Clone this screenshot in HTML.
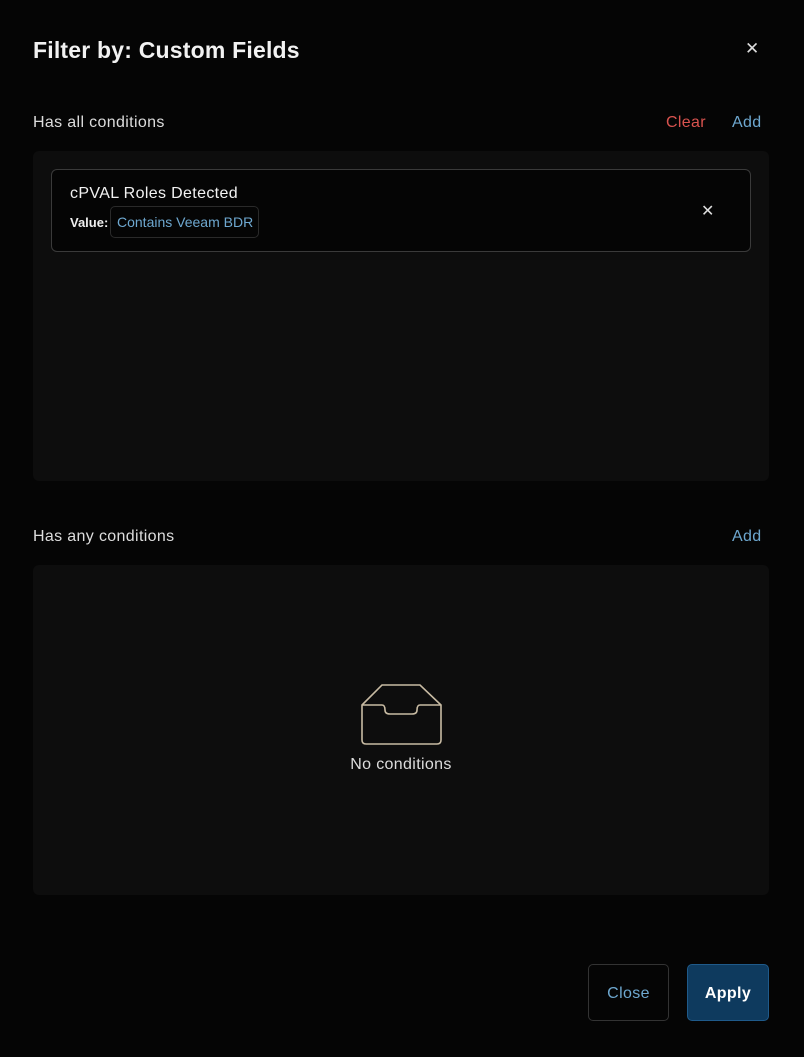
<!DOCTYPE html>
<html><head><style>
body{margin:0;width:804px;height:1057px;background:#050505;font-family:"Liberation Sans",sans-serif;color:#eee;position:relative;overflow:hidden;letter-spacing:0.35px}
.a{position:absolute}
.panel{position:absolute;left:33px;width:736px;background:#0d0d0d;border-radius:6px}
</style></head><body>
<div class="a" style="left:33px;top:37px;font-size:23px;font-weight:bold;color:#f2f2f2;letter-spacing:0.2px">Filter by: Custom Fields</div>
<div class="a" style="left:745px;top:39px;font-size:17px;color:#ddd">✕</div>
<div class="a" style="left:33px;top:114px;font-size:16px;color:#ddd">Has all conditions</div>
<div class="a" style="left:666px;top:114px;font-size:16px;color:#d9534f">Clear</div>
<div class="a" style="left:732px;top:114px;font-size:16px;color:#6ea8d0">Add</div>
<div class="panel" style="top:151px;height:330px"></div>
<div class="a" style="left:51px;top:169px;width:698px;height:81px;border:1px solid #3a3a3a;border-radius:6px;background:#050505"></div>
<div class="a" style="left:70px;top:185px;font-size:16px;color:#f2f2f2">cPVAL Roles Detected</div>
<div class="a" style="left:70px;top:215px;font-size:13px;font-weight:bold;color:#eee;letter-spacing:0">Value:</div>
<div class="a" style="left:110px;top:206px;height:30px;width:147px;border:1px solid #2a2a2a;border-radius:5px"></div>
<div class="a" style="left:117px;top:214px;font-size:14px;color:#6ea8d0;letter-spacing:0">Contains Veeam BDR</div>
<div class="a" style="left:701px;top:201px;font-size:16px;color:#ddd">✕</div>
<div class="a" style="left:33px;top:528px;font-size:16px;color:#ddd">Has any conditions</div>
<div class="a" style="left:732px;top:528px;font-size:16px;color:#6ea8d0">Add</div>
<div class="panel" style="top:565px;height:330px"></div>
<svg class="a" style="left:355px;top:680px" width="92" height="70" viewBox="355 680 92 70" fill="none" stroke="#c8bba3" stroke-width="1.6">
<path d="M382 685H420L441 705V740Q441 744 437 744H366Q362 744 362 740V705Z"/>
<path d="M362 705H382Q385 705 385 710Q385 714 390 714H412Q417 714 417 710Q417 705 420 705H441"/>
</svg>
<div class="a" style="left:0;width:802px;text-align:center;top:756px;font-size:16px;color:#ddd">No conditions</div>
<div class="a" style="left:588px;top:964px;width:79px;height:55px;border:1px solid #333;border-radius:5px;text-align:center;line-height:57px;font-size:16px;color:#6ea8d0">Close</div>
<div class="a" style="left:687px;top:964px;width:80px;height:55px;border:1px solid #1f5a8a;border-radius:5px;background:#0e3a5e;text-align:center;line-height:57px;font-size:16px;font-weight:bold;color:#fff">Apply</div>
</body></html>
